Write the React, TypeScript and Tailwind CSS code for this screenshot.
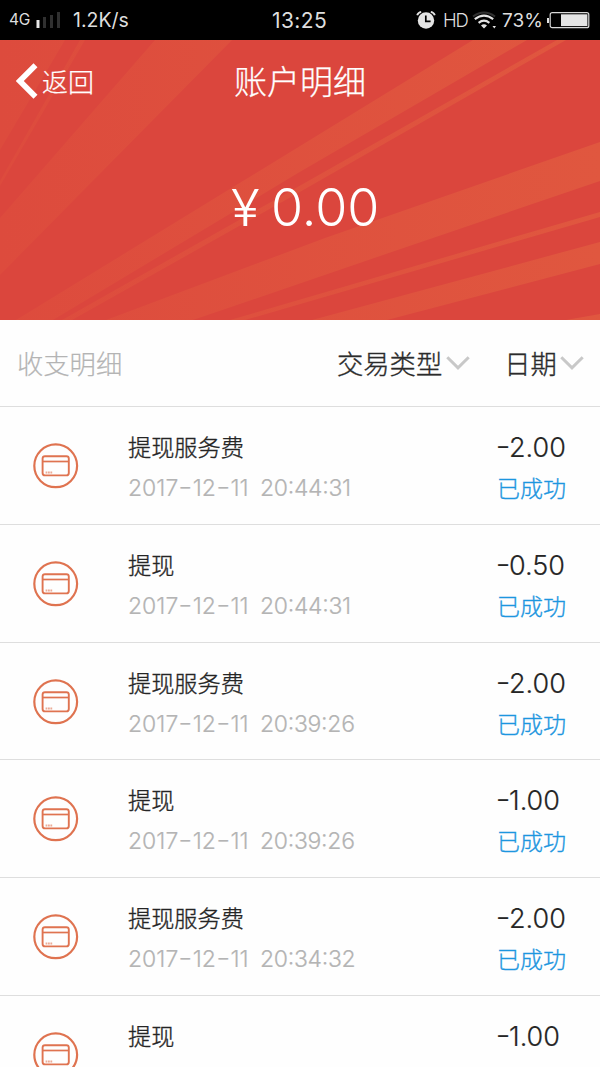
type Row = { title: string; date?: string; clock?: string; amount: string };

const rows: Row[] = [
  { title: "提现服务费", date: "2017-12-11", clock: "20:44:31", amount: "2.00" },
  { title: "提现", date: "2017-12-11", clock: "20:44:31", amount: "0.50" },
  { title: "提现服务费", date: "2017-12-11", clock: "20:39:26", amount: "2.00" },
  { title: "提现", date: "2017-12-11", clock: "20:39:26", amount: "1.00" },
  { title: "提现服务费", date: "2017-12-11", clock: "20:34:32", amount: "2.00" },
  { title: "提现", amount: "1.00" },
];

function StatusBar() {
  return (
    <div className="flex h-10 shrink-0 items-center bg-black text-[#dedede]">
      <span className="ml-[9px] w-[27px] text-[15.5px] tracking-[-0.2px]">4G</span>
      <svg className="h-5 w-6" viewBox="0 0 24 20">
        <path d="M0.5 10h3v8h-3z" fill="#e8e8e8" />
        <path d="M7 7h3v11H7zM14 5h3v13h-3zM21 2h3v16h-3z" fill="#303030" />
      </svg>
      <span className="ml-[13px] w-[199px] pt-0.5 text-[19.5px]">1.2K/s</span>
      <span className="w-[144px] pt-0.5 text-[21px] tracking-[0.4px]">13:25</span>
      <svg className="h-5 w-5" viewBox="0 0 20 20">
        <circle cx="10" cy="10.5" r="8.2" fill="#e4e4e4" />
        <path d="M1.2 5.2Q2 2.5 5.2 1.8M18.8 5.2Q18 2.5 14.8 1.8" stroke="#e4e4e4" strokeWidth="1.8" fill="none" />
        <path d="M9.8 5.5v5.8h4.8" stroke="#000" strokeWidth="1.7" fill="none" />
      </svg>
      <span className="ml-[7px] w-[29px] pt-px text-[18.5px] font-light tracking-[-1.2px]">HD</span>
      <svg className="h-5 w-6" viewBox="0 0 24 20">
        <path d="M1 6.5Q12 -1.5 23 6.5" stroke="#303030" strokeWidth="2" fill="none" />
        <path d="M2.8 9.2Q12 2 21.2 9.2M6.6 12.8Q12 8.6 17.4 12.8" stroke="#e4e4e4" strokeWidth="2.1" fill="none" />
        <path d="M9 15.5Q12 13 15 15.5L12 18.5zM20.5 16h3.5l-1.7 2.5z" fill="#e4e4e4" />
      </svg>
      <span className="ml-[6px] w-[45px] pt-0.5 text-[19px]">73%</span>
      <svg className="h-5 w-[43px]" viewBox="0 0 43 20">
        <path d="M0 8h2v5H0z" fill="#e4e4e4" />
        <rect x="3.2" y="2.7" width="38.6" height="15" rx="2" stroke="#d8d8d8" strokeWidth="1.2" fill="none" />
        <path d="M14 4.3h26.4v11.8H14z" fill="#e4e4e4" />
      </svg>
    </div>
  );
}

function Rays() {
  return (
    <svg className="absolute inset-0 h-full w-full" viewBox="0 0 600 280">
      <defs>
        <linearGradient id="ray" gradientUnits="userSpaceOnUse" x1="0" y1="0" x2="600" y2="0">
          <stop offset="0" stopColor="#dd4b3d" />
          <stop offset="1" stopColor="#e0573f" />
        </linearGradient>
      </defs>
      <g fill="url(#ray)">
        <path d="M0 0H65L0 110zM80 0h5L0 146v-5zM155 0h77L0 235V178z" />
        <path d="M473 0h54L298 133 53 280H16L233 147zM557 0h9L298 153 72 280H62L294 149z" />
        <path d="M600 102v39L383 215 193 280H106L325 198zM600 172v5L245 280H230z" />
        <path d="M600 202v22L387 280H312zM600 274v6H566z" />
      </g>
    </svg>
  );
}

function Chevron() {
  return (
    <svg className="h-4 w-6" viewBox="0 0 24 16" fill="none">
      <path d="M1.3 2.2 12 12.8 22.7 2.2" stroke="#c8c8c8" strokeWidth="3" />
    </svg>
  );
}

function CardIcon() {
  return (
    <svg className="h-[46px] w-[46px] shrink-0" viewBox="0 0 46 46" fill="none" stroke="#df7350">
      <circle cx="22.7" cy="22.8" r="21.4" strokeWidth="2.2" />
      <rect x="9.6" y="13.2" width="26.2" height="19.2" rx="2.4" strokeWidth="1.9" />
      <path d="M10 18.5h26" strokeWidth="1.7" />
      <path d="M12.6 29.4h7" strokeWidth="2" strokeDasharray="1.8 .6" opacity=".6" />
    </svg>
  );
}

function Dash() {
  return <span className="inline-block w-[14.5px] scale-x-[1.35] text-center">-</span>;
}

function DateText({ value }: { value: string }) {
  const [y, m, d] = value.split("-");
  return (
    <>
      {y}
      <Dash />
      {m}
      <Dash />
      {d}
    </>
  );
}

export default function App() {
  return (
    <div className="flex h-[1067px] w-[600px] flex-col overflow-hidden bg-[#fefefe] font-['Inter','Noto_Sans_CJK_SC',sans-serif] whitespace-nowrap">
      <StatusBar />
      <header className="relative h-[280px] shrink-0 bg-[#db463d] text-white">
        <Rays />
        <div className="relative grid h-[84px] grid-cols-3 items-center font-light [-webkit-text-stroke:0.25px]">
          <div className="flex items-center pl-4">
            <svg className="h-[38px] w-[22px]" viewBox="0 0 22 38" fill="none">
              <path d="M19.5 2.2 3.8 18 19.5 33.8" stroke="#fff" strokeWidth="5.6" />
            </svg>
            <span className="ml-1 text-[26px]">返回</span>
          </div>
          <h1 className="pt-px text-center text-[33px]">账户明细</h1>
        </div>
        <div className="relative flex h-[168px] items-center pl-[231px] font-light">
          <span className="w-[40px] origin-left scale-x-[1.06] text-[50px]">¥</span>
          <span className="text-[52px]">0.00</span>
        </div>
      </header>
      <div className="flex h-[87px] shrink-0 items-center border-b border-[#dedede] pt-1 pl-[17px] text-[26.3px] font-light text-[#2b2b2b] [-webkit-text-stroke:0.35px]">
        <span className="w-[320px] text-[#b4b4b4] [-webkit-text-stroke:0.2px]">收支明细</span>
        <span>交易类型</span>
        <span className="ml-1 w-[58px] pb-1"><Chevron /></span>
        <span>日期</span>
        <span className="ml-[3px] pb-1"><Chevron /></span>
      </div>
      <ul>
        {rows.map((row, i) => (
          <li key={i} className="flex h-[117.8px] items-start border-b border-[#dedede] pl-[33px] font-light [font-feature-settings:'case']">
            <div className="w-[95px] pt-9"><CardIcon /></div>
            <div className="w-[369px] pt-[23px]">
              <p className="text-[23.2px] leading-9 text-[#252525] [-webkit-text-stroke:0.35px]">{row.title}</p>
              {row.date && (
                <p className="mt-1 flex gap-[11.5px] text-[23px] leading-9 text-[#b4b4b4] [-webkit-text-stroke:0.2px]">
                  <span><DateText value={row.date} /></span>
                  <span className="tracking-[-0.3px]">{row.clock}</span>
                </p>
              )}
            </div>
            <div className="pt-[23px]">
              <p className="text-[27px] leading-9 text-[#252525] [-webkit-text-stroke:0.2px]">
                <span className="inline-block w-[12px] scale-x-[1.2] text-center">-</span>
                {row.amount}
              </p>
              {row.date && <p className="mt-[5px] text-[23px] leading-9 text-[#1d96df] [-webkit-text-stroke:0.35px]">已成功</p>}
            </div>
          </li>
        ))}
      </ul>
    </div>
  );
}
